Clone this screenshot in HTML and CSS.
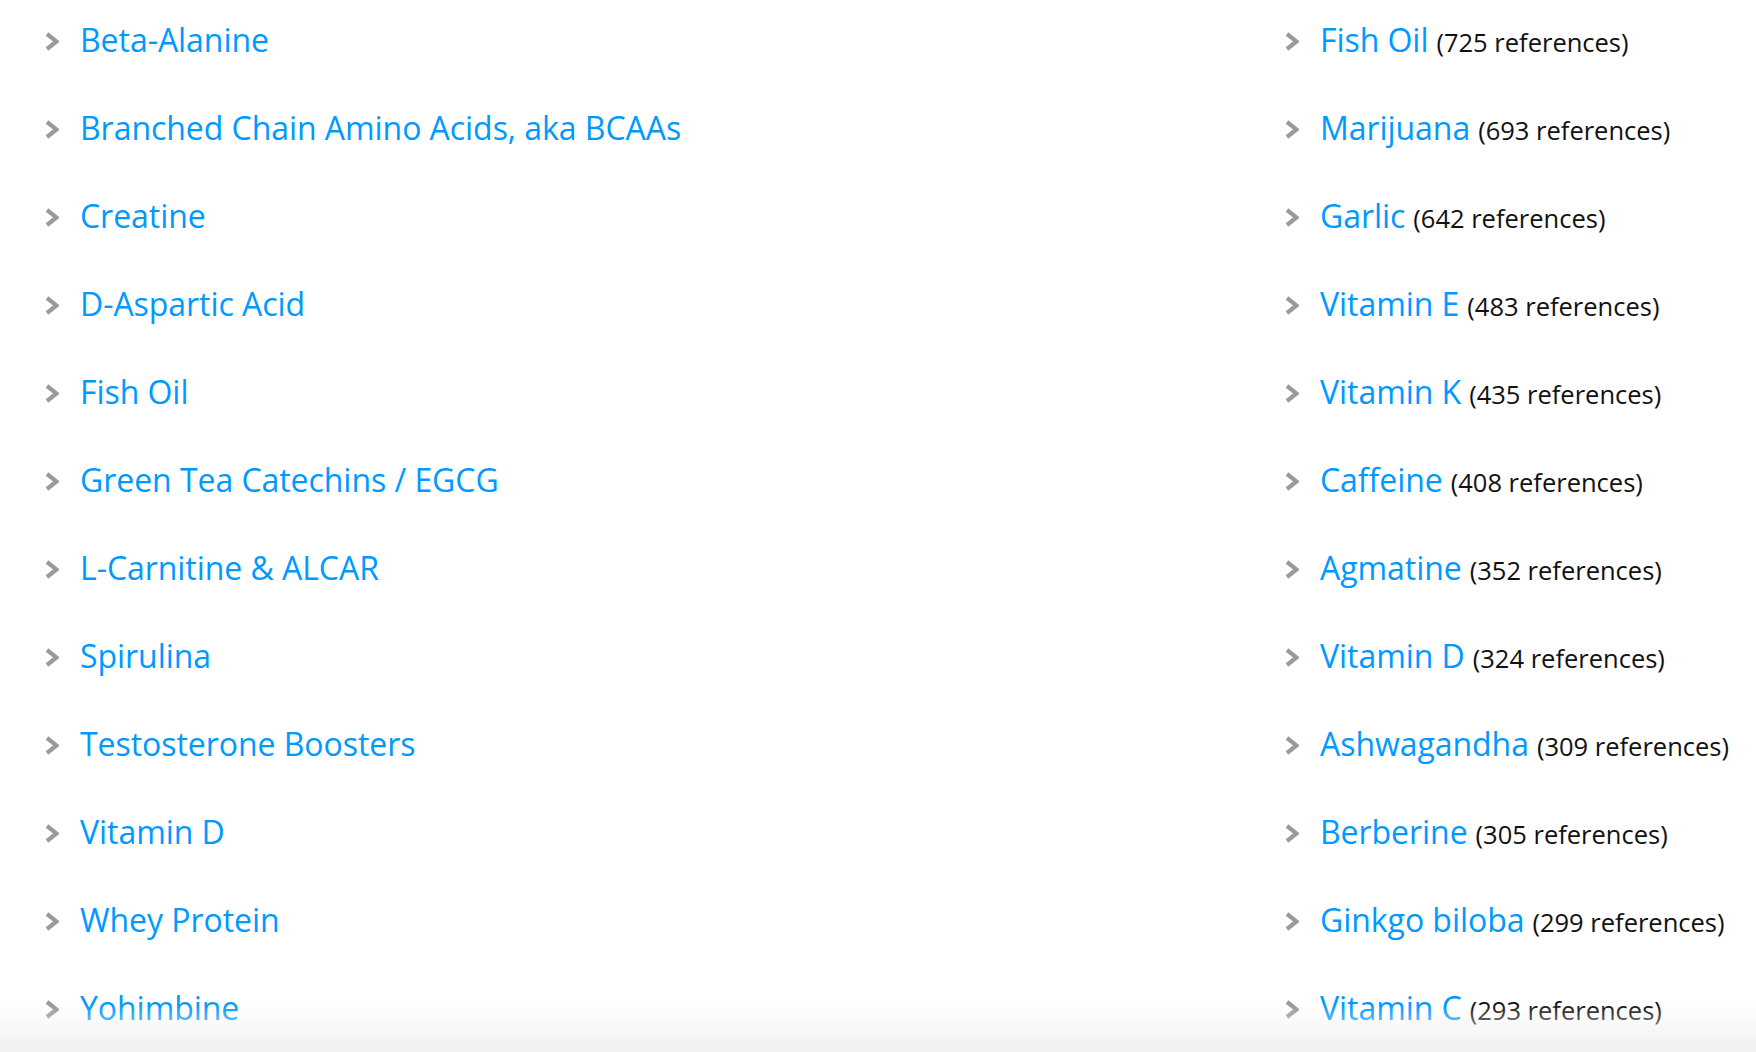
FILE: index.html
```html
<!DOCTYPE html>
<html>
<head>
<meta charset="utf-8">
<link rel="stylesheet" href="styles.css">
</head>
<body>
<div class="columns">
  <ul class="list">
    <li><svg class="chev" viewBox="0 0 14 19"><polyline points="2,2 11.5,9.5 2,17"/></svg><a href="#">Beta-Alanine</a></li>
    <li><svg class="chev" viewBox="0 0 14 19"><polyline points="2,2 11.5,9.5 2,17"/></svg><a href="#">Branched Chain Amino Acids, aka BCAAs</a></li>
    <li><svg class="chev" viewBox="0 0 14 19"><polyline points="2,2 11.5,9.5 2,17"/></svg><a href="#">Creatine</a></li>
    <li><svg class="chev" viewBox="0 0 14 19"><polyline points="2,2 11.5,9.5 2,17"/></svg><a href="#">D-Aspartic Acid</a></li>
    <li><svg class="chev" viewBox="0 0 14 19"><polyline points="2,2 11.5,9.5 2,17"/></svg><a href="#">Fish Oil</a></li>
    <li><svg class="chev" viewBox="0 0 14 19"><polyline points="2,2 11.5,9.5 2,17"/></svg><a href="#">Green Tea Catechins / EGCG</a></li>
    <li><svg class="chev" viewBox="0 0 14 19"><polyline points="2,2 11.5,9.5 2,17"/></svg><a href="#">L-Carnitine &amp; ALCAR</a></li>
    <li><svg class="chev" viewBox="0 0 14 19"><polyline points="2,2 11.5,9.5 2,17"/></svg><a href="#">Spirulina</a></li>
    <li><svg class="chev" viewBox="0 0 14 19"><polyline points="2,2 11.5,9.5 2,17"/></svg><a href="#">Testosterone Boosters</a></li>
    <li><svg class="chev" viewBox="0 0 14 19"><polyline points="2,2 11.5,9.5 2,17"/></svg><a href="#">Vitamin D</a></li>
    <li><svg class="chev" viewBox="0 0 14 19"><polyline points="2,2 11.5,9.5 2,17"/></svg><a href="#">Whey Protein</a></li>
    <li><svg class="chev" viewBox="0 0 14 19"><polyline points="2,2 11.5,9.5 2,17"/></svg><a href="#">Yohimbine</a></li>
  </ul>
  <ul class="list">
    <li><svg class="chev" viewBox="0 0 14 19"><polyline points="2,2 11.5,9.5 2,17"/></svg><a href="#">Fish Oil</a><span class="count">(725 references)</span></li>
    <li><svg class="chev" viewBox="0 0 14 19"><polyline points="2,2 11.5,9.5 2,17"/></svg><a href="#">Marijuana</a><span class="count">(693 references)</span></li>
    <li><svg class="chev" viewBox="0 0 14 19"><polyline points="2,2 11.5,9.5 2,17"/></svg><a href="#">Garlic</a><span class="count">(642 references)</span></li>
    <li><svg class="chev" viewBox="0 0 14 19"><polyline points="2,2 11.5,9.5 2,17"/></svg><a href="#">Vitamin E</a><span class="count">(483 references)</span></li>
    <li><svg class="chev" viewBox="0 0 14 19"><polyline points="2,2 11.5,9.5 2,17"/></svg><a href="#">Vitamin K</a><span class="count">(435 references)</span></li>
    <li><svg class="chev" viewBox="0 0 14 19"><polyline points="2,2 11.5,9.5 2,17"/></svg><a href="#">Caffeine</a><span class="count">(408 references)</span></li>
    <li><svg class="chev" viewBox="0 0 14 19"><polyline points="2,2 11.5,9.5 2,17"/></svg><a href="#">Agmatine</a><span class="count">(352 references)</span></li>
    <li><svg class="chev" viewBox="0 0 14 19"><polyline points="2,2 11.5,9.5 2,17"/></svg><a href="#">Vitamin D</a><span class="count">(324 references)</span></li>
    <li><svg class="chev" viewBox="0 0 14 19"><polyline points="2,2 11.5,9.5 2,17"/></svg><a href="#">Ashwagandha</a><span class="count">(309 references)</span></li>
    <li><svg class="chev" viewBox="0 0 14 19"><polyline points="2,2 11.5,9.5 2,17"/></svg><a href="#">Berberine</a><span class="count">(305 references)</span></li>
    <li><svg class="chev" viewBox="0 0 14 19"><polyline points="2,2 11.5,9.5 2,17"/></svg><a href="#">Ginkgo biloba</a><span class="count">(299 references)</span></li>
    <li><svg class="chev" viewBox="0 0 14 19"><polyline points="2,2 11.5,9.5 2,17"/></svg><a href="#">Vitamin C</a><span class="count">(293 references)</span></li>
  </ul>
</div>
<div class="fade"></div>
</body>
</html>
```

FILE: styles.css
```css
html, body {
  margin: 0;
  padding: 0;
  background: #ffffff;
  overflow: hidden;
}
body {
  font-family: "Open Sans", "Liberation Sans", sans-serif;
  height: 1052px;
}
.columns {
  display: grid;
  grid-template-columns: 1240px 1fr;
  padding-left: 45px;
}
.list {
  list-style: none;
  margin: 0;
  padding: 0;
  display: flex;
  flex-direction: column;
  gap: 8px;
}
.list li {
  display: flex;
  align-items: baseline;
  height: 80px;
  line-height: 80px;
  white-space: nowrap;
}
.chev {
  width: 14px;
  height: 19px;
  flex: none;
  margin-right: 21px;
  align-self: center;
  position: relative;
  top: 1px;
}
.chev polyline {
  fill: none;
  stroke: #9a9a9a;
  stroke-width: 4.2;
  stroke-linecap: butt;
  stroke-linejoin: miter;
}
.list a {
  color: #0099ff;
  text-decoration: none;
  font-size: 32px;
  letter-spacing: -0.05px;
}
.count {
  color: #111111;
  font-size: 25.5px;
  margin-left: 8px;
}
.fade {
  position: fixed;
  left: 0;
  right: 0;
  bottom: 0;
  height: 48px;
  background: linear-gradient(to bottom, rgba(240,240,240,0), rgba(240,240,240,1));
  pointer-events: none;
}
```
